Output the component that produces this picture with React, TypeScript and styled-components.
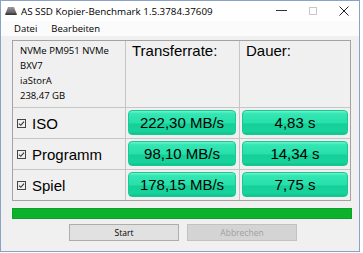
import React from "react";
import styled, { createGlobalStyle } from "styled-components";

const Global = createGlobalStyle`
  html, body { margin: 0; padding: 0; background: #ffffff; }
  * { box-sizing: border-box; }
`;

const Window = styled.div`
  width: 360px;
  height: 252px;
  border: 1px solid #8aa3c4;
  background: #f0f0f0;
  display: flex;
  flex-direction: column;
  overflow: hidden;
`;

const TitleBar = styled.div`
  height: 20px;
  background: #ffffff;
  display: flex;
  align-items: center;
  padding-left: 4px;
  font-family: "Open Sans", "Noto Sans", sans-serif;
  font-size: 9.8px;
  color: #000;
`;

const TitleText = styled.span`
  margin-left: 4px;
  flex: 1;
  white-space: nowrap;
`;

const Caption = styled.div`
  width: 31px;
  height: 20px;
  display: flex;
  align-items: center;
  justify-content: center;
`;

const MenuBar = styled.div`
  height: 15px;
  background: #fbfbfb;
  display: flex;
  align-items: center;
  padding-left: 10px;
  gap: 8px;
  font-family: "Open Sans", "Noto Sans", sans-serif;
  font-size: 9.5px;
  color: #000;
`;

const MenuItem = styled.span`
  padding: 0 3px;
`;

const Body = styled.div`
  flex: 1;
  padding: 4px 7px 0 11px;
  display: flex;
  flex-direction: column;
`;

const Table = styled.div`
  display: grid;
  grid-template-columns: 112px 113px 110px;
  grid-template-rows: 66px 30px 30px 30px;
  gap: 1px;
  width: 339px;
  border: 1px solid #a3a3a3;
  background: #c6c6c6;
`;

const Cell = styled.div`
  background: #f0f0f0;
`;

const InfoCell = styled(Cell)`
  padding: 2px 0 0 7px;
  font-family: "Open Sans", "Noto Sans", sans-serif;
  font-size: 9.5px;
  line-height: 15px;
  color: #000;
`;

const HeadCell = styled(Cell)`
  padding: 1px 0 0 6px;
  font-family: "Liberation Sans", Arial, sans-serif;
  font-size: 15px;
  line-height: 17px;
  color: #000;
`;

const LabelCell = styled(Cell)`
  display: flex;
  align-items: center;
  padding-left: 4px;
  gap: 6px;
  font-family: "Liberation Sans", Arial, sans-serif;
  font-size: 15px;
  color: #000;
`;

const ValueCell = styled(Cell)<{ $right?: number }>`
  padding: 2px ${(p) => p.$right ?? 3}px 3px 2px;
  display: flex;
`;

const ValueBox = styled.div`
  flex: 1;
  border-radius: 4px;
  border: 1px solid #19c994;
  background: linear-gradient(
    to bottom,
    #6ff3cc 0%,
    #34e6b3 12%,
    #27e0aa 50%,
    #16cf98 58%,
    #17d49c 88%,
    #10c18b 100%
  );
  display: flex;
  align-items: center;
  justify-content: center;
  font-family: "Liberation Sans", Arial, sans-serif;
  font-size: 15px;
  color: #000;
`;

const Progress = styled.div`
  margin-top: 7px;
  width: 340px;
  height: 11px;
  background: #0db12b;
  border: 1px solid #0aa326;
`;

const ButtonRow = styled.div`
  margin-top: 5px;
  display: flex;
  gap: 8px;
  padding-left: 57px;
`;

const Button = styled.div<{ $disabled?: boolean }>`
  width: 110px;
  height: 17px;
  display: flex;
  align-items: center;
  justify-content: center;
  font-family: "Open Sans", "Noto Sans", sans-serif;
  font-size: 8.5px;
  background: ${(p) => (p.$disabled ? "#d4d4d4" : "#e1e1e1")};
  border: 1px solid ${(p) => (p.$disabled ? "#c2c2c2" : "#adadad")};
  color: ${(p) => (p.$disabled ? "#a0a0a0" : "#000")};
`;

const DriveIcon = () => (
  <svg width="12" height="10" viewBox="0 0 12 10">
    <defs>
      <linearGradient id="dg" x1="0" y1="0" x2="0" y2="1">
        <stop offset="0" stopColor="#9a9a9a" />
        <stop offset="1" stopColor="#4a4a4a" />
      </linearGradient>
    </defs>
    <path d="M3 1 L9 1 L11.5 7.5 L11.5 9 L0.5 9 L0.5 7.5 Z" fill="url(#dg)" />
    <rect x="0.5" y="7.5" width="11" height="1.5" fill="#3a3a3a" />
  </svg>
);

const CheckIcon = () => (
  <svg width="9" height="9" viewBox="0 0 9 9">
    <rect x="0.5" y="0.5" width="8" height="8" fill="none" stroke="#444" strokeWidth="1" />
    <path d="M2 4.6 L3.8 6.3 L7 2.6" fill="none" stroke="#333" strokeWidth="1.1" />
  </svg>
);

const rows = [
  { label: "ISO", rate: "222,30 MB/s", time: "4,83 s" },
  { label: "Programm", rate: "98,10 MB/s", time: "14,34 s" },
  { label: "Spiel", rate: "178,15 MB/s", time: "7,75 s" },
];

export default function App() {
  return (
    <>
      <Global />
      <Window>
        <TitleBar>
          <DriveIcon />
          <TitleText>AS SSD Kopier-Benchmark 1.5.3784.37609</TitleText>
          <Caption>
            <svg width="11" height="2" viewBox="0 0 11 2">
              <rect width="11" height="1" fill="#333" />
            </svg>
          </Caption>
          <Caption>
            <svg width="8" height="8" viewBox="0 0 8 8">
              <rect x="0.5" y="0.5" width="7" height="7" fill="none" stroke="#c8c8c8" />
            </svg>
          </Caption>
          <Caption>
            <svg width="10" height="10" viewBox="0 0 10 10">
              <path d="M0.5 0.5 L9.5 9.5 M9.5 0.5 L0.5 9.5" stroke="#222" strokeWidth="1" />
            </svg>
          </Caption>
        </TitleBar>
        <MenuBar>
          <MenuItem>Datei</MenuItem>
          <MenuItem>Bearbeiten</MenuItem>
        </MenuBar>
        <Body>
          <Table>
            <InfoCell>
              NVMe PM951 NVMe
              <br />
              BXV7
              <br />
              iaStorA
              <br />
              238,47 GB
            </InfoCell>
            <HeadCell>Transferrate:</HeadCell>
            <HeadCell>Dauer:</HeadCell>
            {rows.map((r) => (
              <React.Fragment key={r.label}>
                <LabelCell>
                  <CheckIcon />
                  {r.label}
                </LabelCell>
                <ValueCell>
                  <ValueBox>{r.rate}</ValueBox>
                </ValueCell>
                <ValueCell $right={2}>
                  <ValueBox>{r.time}</ValueBox>
                </ValueCell>
              </React.Fragment>
            ))}
          </Table>
          <Progress />
          <ButtonRow>
            <Button>Start</Button>
            <Button $disabled>Abbrechen</Button>
          </ButtonRow>
        </Body>
      </Window>
    </>
  );
}
